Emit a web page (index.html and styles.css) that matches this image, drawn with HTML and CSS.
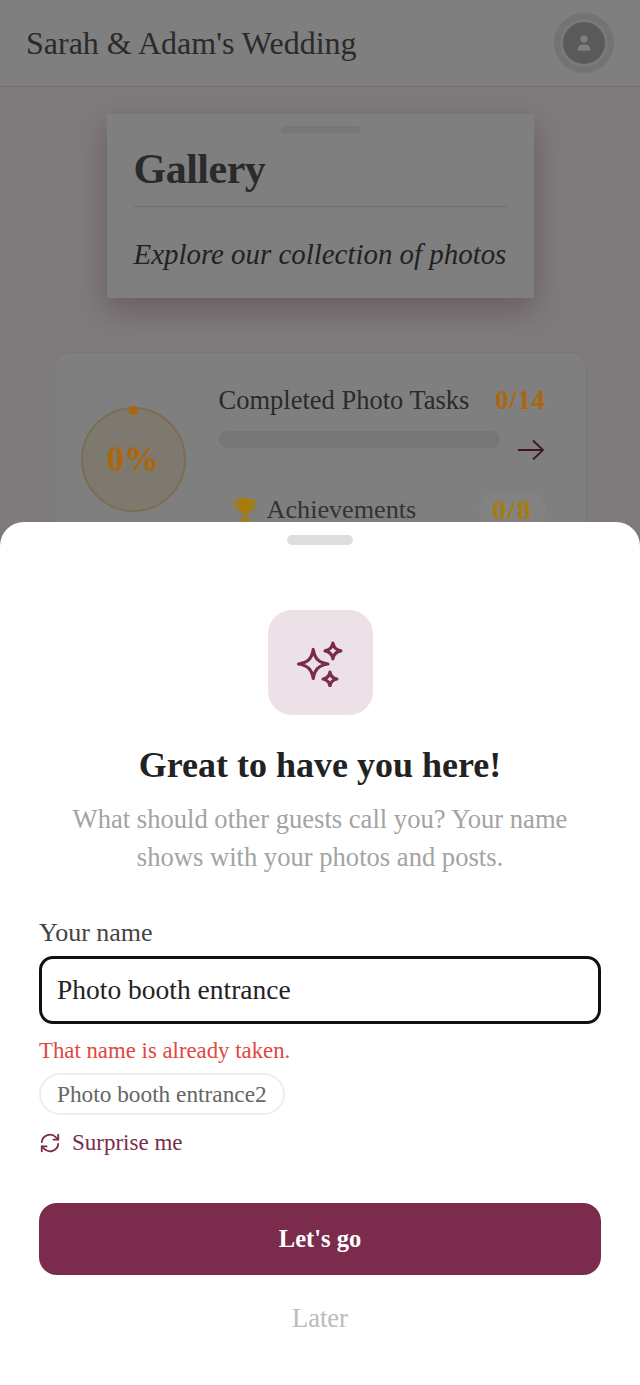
FILE: index.html
```html
<!DOCTYPE html>
<html lang="en">
<head>
  <meta charset="UTF-8" />
  <title>Sarah &amp; Adam's Wedding</title>
  <link rel="stylesheet" href="styles.css">
</head>
<body>
  <div class="page">
    <header class="topbar">
      <div class="event-title">Sarah &amp; Adam's Wedding</div>
      <div class="avatar-ring">
        <div class="avatar">
          <svg width="16" height="18" viewBox="0 0 16 18"><circle cx="8" cy="5" r="3.6" fill="#fff"/><path d="M1.5 16.5c0-4 2.6-6 6.5-6s6.5 2 6.5 6z" fill="#fff"/></svg>
        </div>
      </div>
    </header>

    <section class="gallery-card">
      <div class="tab"></div>
      <h1>Gallery</h1>
      <div class="rule"></div>
      <p>Explore our collection of photos</p>
    </section>

    <section class="progress-card">
      <div class="ring">
        <span class="ring-dot"></span>
        <span class="accent">0%</span>
      </div>
      <div class="progress-info">
        <div class="task-row">
          <span>Completed Photo Tasks</span>
          <b class="accent">0/14</b>
        </div>
        <div class="bar-row">
          <div class="bar"></div>
          <svg class="arrow" width="30" height="24" viewBox="0 0 30 24" fill="none" stroke="#3f1629" stroke-width="1.8"><path d="M2 12h25M17 2.500 27 12 17 21.500"/></svg>
        </div>
        <div class="ach-row">
          <svg class="trophy" width="26" height="26" viewBox="0 0 24 24"><path fill="#a87c0c" d="M6 1h12v2h4v4c0 3-2 5-5 5.400A6 6 0 0 1 13.200 15.500V19H17v3H7v-3h3.800v-3.500A6 6 0 0 1 7 12.400C4 12 2 10 2 7V3h4zm0 4H4v2c0 1.600 1 2.800 2 3.200zm12 0v5.200c1-.4 2-1.600 2-3.200V5z"/></svg>
          <span>Achievements</span>
          <b class="gold">0/8</b>
        </div>
      </div>
    </section>

    <div class="scrim"></div>

    <section class="sheet">
      <div class="handle"></div>
      <div class="sparkle-tile">
        <svg width="48" height="48" viewBox="10 6 39 39" fill="none" stroke="#7b2c4d" stroke-width="2.600" stroke-linejoin="round">
          <path d="M24 14.500c1.100 7.300 4.400 10.700 12 11.800-7.600 1.100-10.900 4.500-12 11.800-1.100-7.300-4.400-10.700-12-11.800 7.600-1.100 10.900-4.500 12-11.800z"/>
          <path d="M40 9.300c.7 4 2.400 5.700 6.400 6.400-4 .7-5.700 2.400-6.400 6.400-.7-4-2.400-5.700-6.400-6.400 4-.7 5.700-2.400 6.400-6.400z"/>
          <path d="M37.600 32.900c.6 3.500 2.100 5 5.600 5.600-3.500.6-5 2.100-5.600 5.600-.6-3.500-2.100-5-5.600-5.600 3.500-.6 5-2.100 5.600-5.600z"/>
        </svg>
      </div>
      <h2>Great to have you here!</h2>
      <p class="lead">What should other guests call you? Your name shows with your photos and posts.</p>

      <label class="field-label" for="guestName">Your name</label>
      <input class="name-input" id="guestName" type="text" value="Photo booth entrance" />
      <div class="error">That name is already taken.</div>
      <button class="suggestion">Photo booth entrance2</button>
      <div class="surprise">
        <svg width="22" height="22" viewBox="0 0 24 24" fill="none" stroke="#7b2c4d" stroke-width="2" stroke-linecap="round" stroke-linejoin="round">
          <path d="M3 11a9 9 0 0 1 15.500-5.200L21 8.300"/><path d="M21 3v5.300h-5.300"/>
          <path d="M21 13a9 9 0 0 1-15.500 5.200L3 15.700"/><path d="M3 21v-5.300h5.300"/>
        </svg>
        <span>Surprise me</span>
      </div>
      <button class="go-btn">Let's go</button>
      <div class="later">Later</div>
    </section>
  </div>
</body>
</html>
```

FILE: styles.css
```css
* {
  box-sizing: border-box;
}
html, body {
  margin: 0;
  height: 100%;
}
body {
  font-family: "Liberation Serif", "DejaVu Serif", serif;
  background: #fff;
  color: #222;
}
.page {
  position: relative;
  width: 640px;
  height: 1385px;
  overflow: hidden;
  background: #fff5f7;
}
.topbar {
  height: 87px;
  display: flex;
  align-items: center;
  justify-content: space-between;
  padding: 0 26px;
  background: #fff;
  border-bottom: 1px solid #ddd;
}
.event-title {
  font-size: 32px;
  color: #555;
}
.avatar-ring {
  width: 60px;
  height: 60px;
  border-radius: 50%;
  background: #e6e6e6;
  display: flex;
  align-items: center;
  justify-content: center;
}
.avatar {
  width: 48px;
  height: 48px;
  border-radius: 50%;
  background: #b5b5b5;
  border: 3px solid #f2f2f2;
  display: flex;
  align-items: center;
  justify-content: center;
}
.gallery-card {
  position: relative;
  width: 427px;
  height: 184px;
  margin: 27px auto 0;
  padding: 30px 27px 0;
  background: #fff;
  box-shadow: 0 12px 30px rgba(90, 50, 60, 0.3);
}
.tab {
  position: absolute;
  top: 12px;
  left: 174px;
  width: 79px;
  height: 7px;
  border-radius: 4px;
  background: #eee;
}
.gallery-card h1 {
  margin: 0;
  font-size: 42px;
  line-height: 50px;
  font-weight: 700;
  letter-spacing: -0.5px;
  color: #555;
}
.rule {
  height: 1px;
  margin-top: 12px;
  background: #ddd;
}
.gallery-card p {
  margin: 29px 0 0;
  font-size: 28.900px;
  line-height: 36px;
  font-style: italic;
  color: #444;
  white-space: nowrap;
}
.progress-card {
  width: 533px;
  height: 260px;
  margin: 54px auto 0;
  padding: 30px 40px 0 26px;
  display: flex;
  gap: 33px;
  background: #fff;
  border: 1px solid #eee;
  border-radius: 16px;
}
.ring {
  position: relative;
  flex: none;
  width: 105px;
  height: 105px;
  margin-top: 24px;
  border-radius: 50%;
  border: 2px solid #f6d9a8;
  background: #fdf2df;
  display: flex;
  align-items: center;
  justify-content: center;
  font-size: 35px;
  font-weight: 700;
}
.ring-dot {
  position: absolute;
  z-index: 2;
  top: -3px;
  left: 46px;
  width: 9px;
  height: 9px;
  border-radius: 50%;
  background: #ad660a;
}
/* these stay saturated through the dimmed backdrop */
.accent, .gold, .arrow, .trophy {
  position: relative;
  z-index: 2;
}
.accent {
  color: #ad660a;
}
.gold {
  color: #a87c0c;
}
.progress-info {
  flex: 1;
}
.task-row {
  display: flex;
  justify-content: space-between;
  font-size: 26.500px;
  line-height: 34px;
  color: #555;
}
.task-row b {
  letter-spacing: 0.8px;
}
.bar-row {
  position: relative;
  margin-top: 14px;
}
.bar {
  width: 281px;
  height: 17px;
  border-radius: 9px;
  background: #ececec;
}
.arrow {
  position: absolute;
  top: 7px;
  right: 0;
}
.ach-row {
  display: flex;
  align-items: center;
  gap: 9px;
  margin: 44px 0 0 13px;
  font-size: 26.200px;
  color: #666;
}
.ach-row b {
  margin-left: auto;
  padding: 2px 13px;
  border-radius: 20px;
  background: #828282;
  font-size: 28px;
  letter-spacing: 1.500px;
}
.scrim {
  position: absolute;
  inset: 0;
  background: rgba(0, 0, 0, 0.5);
}
.sheet {
  position: absolute;
  z-index: 3;
  left: 0;
  right: 0;
  top: 522px;
  bottom: 0;
  padding: 13px 39px 0;
  background: #fff;
  border-radius: 24px 24px 0 0;
  display: flex;
  flex-direction: column;
}
.handle {
  width: 66px;
  height: 10px;
  margin: 0 auto;
  border-radius: 5px;
  background: #ddd;
}
.sparkle-tile {
  width: 105px;
  height: 105px;
  margin: 65px auto 0;
  border-radius: 24px;
  background: #ece1e6;
  display: flex;
  align-items: center;
  justify-content: center;
}
h2 {
  margin: 28px 0 0;
  text-align: center;
  font-size: 36px;
  line-height: 44px;
  font-weight: 700;
  color: #222;
}
.lead {
  margin: 13px 18px 0;
  text-align: center;
  font-size: 26.600px;
  line-height: 38px;
  color: #a3a3a3;
}
.field-label {
  margin-top: 41px;
  font-size: 26px;
  line-height: 32px;
  color: #444;
}
.name-input {
  height: 68px;
  margin-top: 7px;
  padding: 0 15px;
  border: 3px solid #111;
  border-radius: 14px;
  font: 27.500px "Liberation Serif", serif;
  color: #222;
  outline: none;
}
.error {
  margin-top: 13px;
  font-size: 22.800px;
  line-height: 28px;
  color: #e0483e;
}
.suggestion {
  align-self: flex-start;
  height: 42px;
  margin-top: 8px;
  padding: 0 16px;
  border: 2px solid #eee;
  border-radius: 21px;
  background: #fff;
  font: 23.300px "Liberation Serif", serif;
  color: #666;
}
.surprise {
  display: flex;
  align-items: center;
  gap: 11px;
  margin-top: 14px;
  font-size: 23px;
  line-height: 28px;
  color: #7b2c4d;
}
.go-btn {
  height: 72px;
  margin-top: 46px;
  border: none;
  border-radius: 18px;
  background: #7b2c4d;
  color: #fff;
  font: 700 24.500px "Liberation Serif", serif;
}
.later {
  margin-top: 28px;
  text-align: center;
  font-size: 26.500px;
  line-height: 30px;
  color: #bbb;
}
```
